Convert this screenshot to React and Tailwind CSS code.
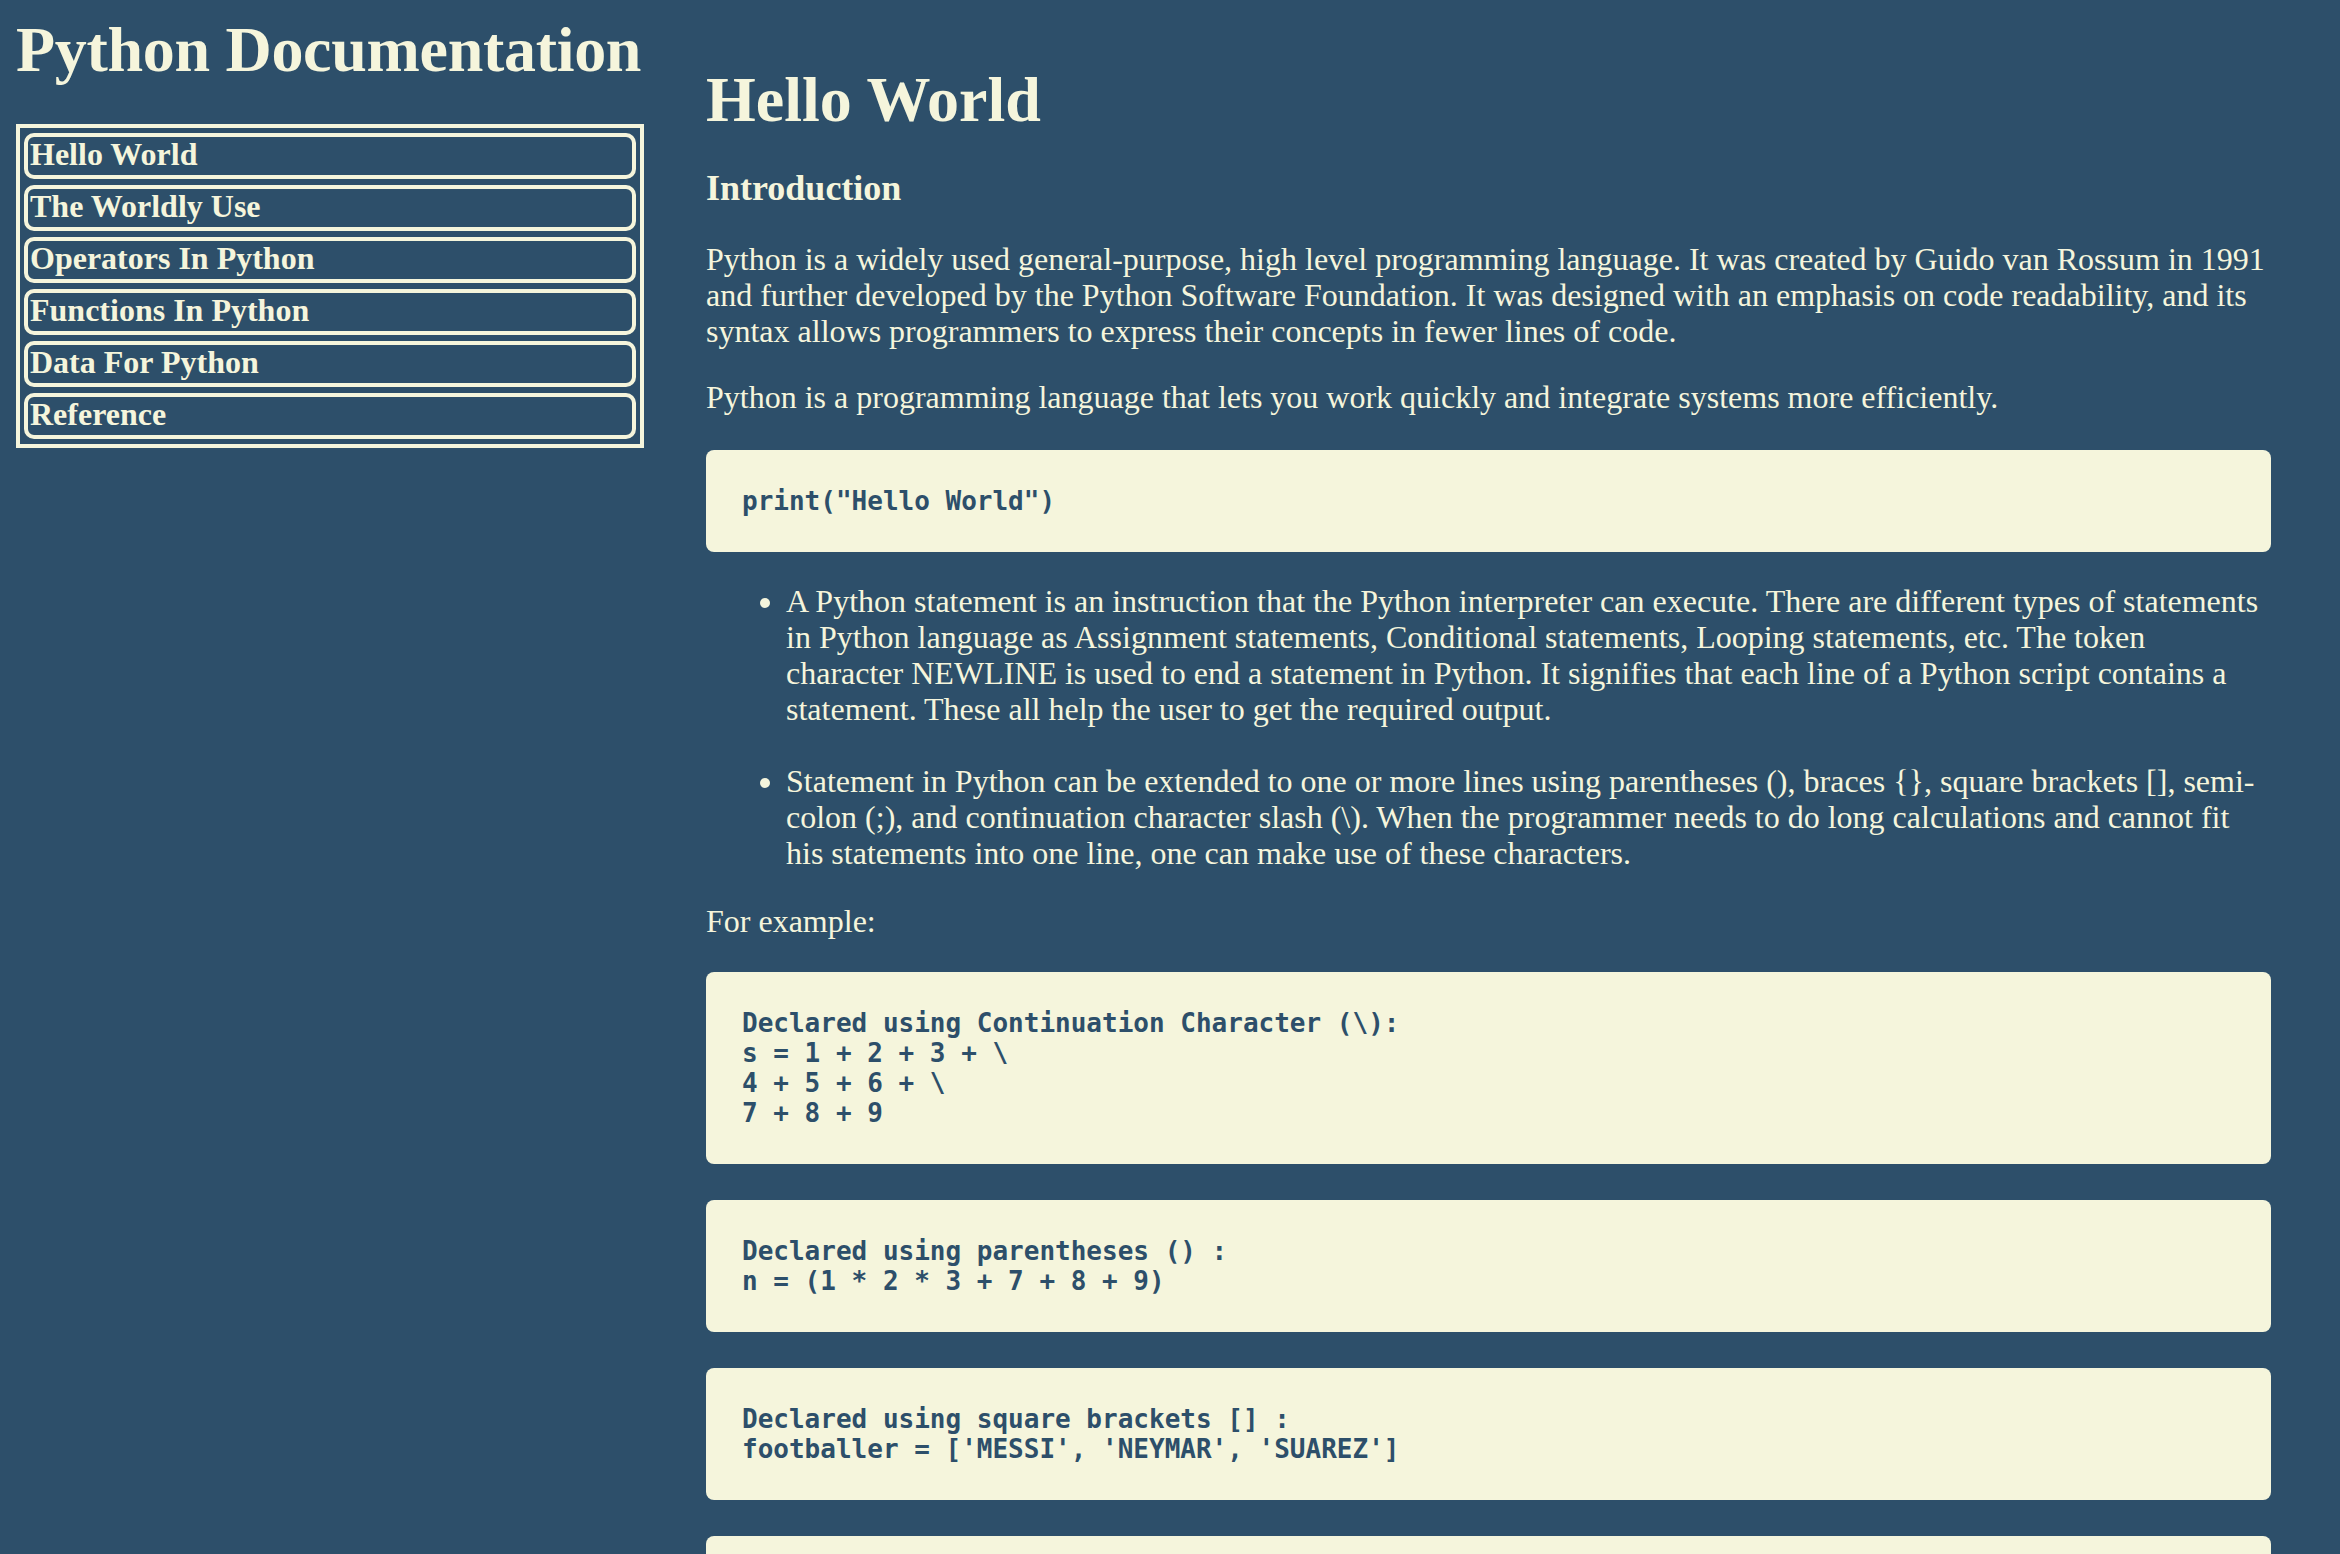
const navItems = [
  "Hello World",
  "The Worldly Use",
  "Operators In Python",
  "Functions In Python",
  "Data For Python",
  "Reference",
];

const CodeBlock = ({ children, className = "" }) => (
  <div className={`rounded-lg bg-[#f5f5dc] px-[36px] py-[36px] ${className}`}>
    <pre className="font-['DejaVu_Sans_Mono',monospace] text-[26px] font-bold leading-[30px] text-[#2d4f6a]">
      {children}
    </pre>
  </div>
);

export default function App() {
  return (
    <div className="flex min-h-screen bg-[#2d4f6a] font-['Liberation_Serif',serif] text-[#f5f5dc]">
      <nav className="w-[706px] shrink-0 pl-4 pr-[62px]">
        <h1 className="mt-[13px] whitespace-nowrap text-[64px] font-bold leading-[74px] tracking-[-0.3px]">
          Python Documentation
        </h1>

        <div className="mt-[37px] flex flex-col gap-[6px] border-4 border-[#f5f5dc] px-[4px] pt-[5px] pb-[5px]">
          {navItems.map((item) => (
            <a
              key={item}
              href={`#${item.replace(/ /g, "_")}`}
              className="h-[46px] rounded-[10px] border-4 border-[#f5f5dc] px-[2px] text-[32px] font-bold leading-[34px]"
            >
              {item}
            </a>
          ))}
        </div>
      </nav>

      <main className="w-[1565px] shrink-0 pt-[63px] pb-10">
        <h1 className="text-[64px] font-bold leading-[74px]">Hello World</h1>
        <h3 className="mt-[30px] text-[36px] font-bold leading-[42px]">Introduction</h3>

        <p className="mt-[32px] text-[32px] leading-[36px]">
          Python is a widely used general-purpose, high level programming language. It was created by Guido van
          Rossum in 1991 and further developed by the Python Software Foundation. It was designed with an emphasis
          on code readability, and its syntax allows programmers to express their concepts in fewer lines of code.
        </p>
        <p className="mt-[30px] text-[32px] leading-[36px]">
          Python is a programming language that lets you work quickly and integrate systems more efficiently.
        </p>

        <CodeBlock className="mt-[35px]">print("Hello World")</CodeBlock>

        <ul className="mt-[31px] flex list-disc flex-col gap-[36px] pl-[80px] pr-[8px] text-[32px] leading-[36px]">
          <li>
            A Python statement is an instruction that the Python interpreter can execute. There are different types
            of statements in Python language as Assignment statements, Conditional statements, Looping statements,
            etc. The token character NEWLINE is used to end a statement in Python. It signifies that each line of a
            Python script contains a statement. These all help the user to get the required output.
          </li>
          <li>
            {
              "Statement in Python can be extended to one or more lines using parentheses (), braces {}, square brackets [], semi-colon (;), and continuation character slash (\\). When the programmer needs to do long calculations and cannot fit his statements into one line, one can make use of these characters."
            }
          </li>
        </ul>

        <p className="mt-[32px] text-[32px] leading-[36px]">For example:</p>

        <CodeBlock className="mt-[33px]">
          {"Declared using Continuation Character (\\):\ns = 1 + 2 + 3 + \\\n4 + 5 + 6 + \\\n7 + 8 + 9"}
        </CodeBlock>

        <CodeBlock className="mt-[36px]">
          {"Declared using parentheses () :\nn = (1 * 2 * 3 + 7 + 8 + 9)"}
        </CodeBlock>

        <CodeBlock className="mt-[36px]">
          {"Declared using square brackets [] :\nfootballer = ['MESSI', 'NEYMAR', 'SUAREZ']"}
        </CodeBlock>

        <CodeBlock className="mt-[36px]">
          {"Declared using braces {} :\nx = {1 + 2 + 3 + 4 + 5 + 6 +\n7 + 8 + 9}"}
        </CodeBlock>
      </main>
    </div>
  );
}
